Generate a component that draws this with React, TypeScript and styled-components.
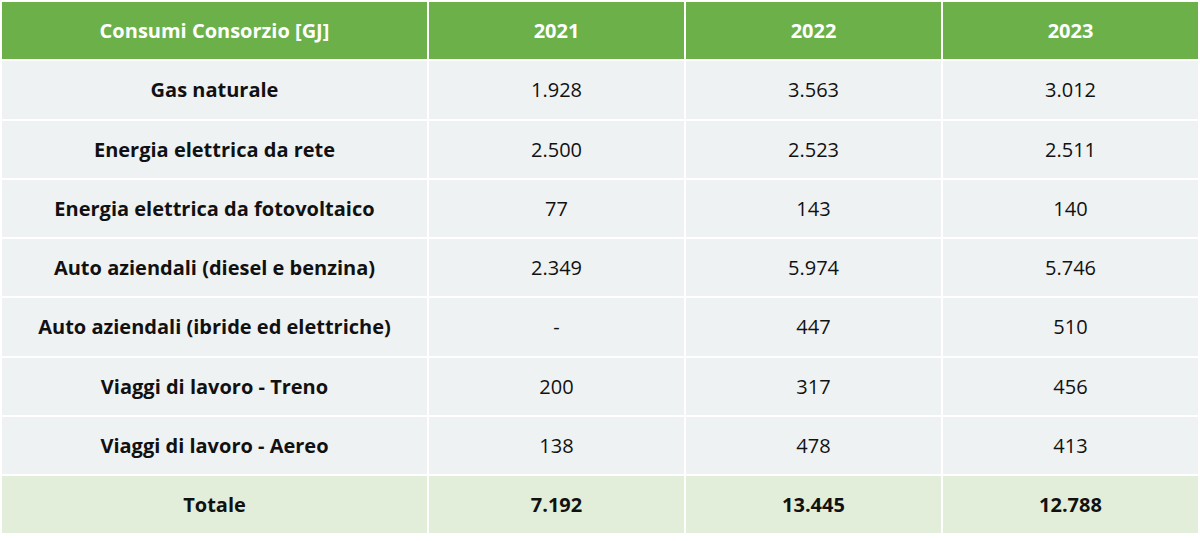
import React from "react";
import styled, { createGlobalStyle } from "styled-components";

type RowType = {
  label: string;
  values: string[];
};

const rows: RowType[] = [
  { label: "Gas naturale", values: ["1.928", "3.563", "3.012"] },
  { label: "Energia elettrica da rete", values: ["2.500", "2.523", "2.511"] },
  { label: "Energia elettrica da fotovoltaico", values: ["77", "143", "140"] },
  { label: "Auto aziendali (diesel e benzina)", values: ["2.349", "5.974", "5.746"] },
  { label: "Auto aziendali (ibride ed elettriche)", values: ["-", "447", "510"] },
  { label: "Viaggi di lavoro - Treno", values: ["200", "317", "456"] },
  { label: "Viaggi di lavoro - Aereo", values: ["138", "478", "413"] },
];

const years = ["2021", "2022", "2023"];
const totals = ["7.192", "13.445", "12.788"];

const GlobalStyle = createGlobalStyle`
  body {
    margin: 0;
    background: #ffffff;
    font-family: "Open Sans", "Noto Sans", sans-serif;
  }
`;

const App: React.FC = () => {
  return (
    <>
      <GlobalStyle />
      <StyledTable>
        <Cell $kind="head">Consumi Consorzio [GJ]</Cell>
        {years.map((y) => (
          <Cell key={y} $kind="head">
            {y}
          </Cell>
        ))}

        {rows.map((r) => (
          <React.Fragment key={r.label}>
            <Cell $kind="body" $bold>
              {r.label}
            </Cell>
            {r.values.map((v, i) => (
              <Cell key={i} $kind="body">
                {v}
              </Cell>
            ))}
          </React.Fragment>
        ))}

        <Cell $kind="total" $bold>
          Totale
        </Cell>
        {totals.map((t) => (
          <Cell key={t} $kind="total" $bold>
            {t}
          </Cell>
        ))}
      </StyledTable>
    </>
  );
};

const StyledTable = styled.div`
  display: grid;
  grid-template-columns: 425px 255px 255px 255px;
  grid-auto-rows: 57.25px;
  gap: 2px;
  padding: 2px;
  width: 1200px;
  box-sizing: border-box;
  background: #ffffff;
`;

const backgrounds = {
  head: "#6bb049",
  body: "#eff2f3",
  total: "#e2eed9",
};

const Cell = styled.div<{ $kind: "head" | "body" | "total"; $bold?: boolean }>`
  display: flex;
  align-items: center;
  justify-content: center;
  background: ${(p) => backgrounds[p.$kind]};
  color: ${(p) => (p.$kind === "head" ? "#ffffff" : "#111111")};
  font-size: 20px;
  font-weight: ${(p) => (p.$kind === "head" || p.$bold ? 700 : 400)};
  white-space: nowrap;
`;

export default App;
